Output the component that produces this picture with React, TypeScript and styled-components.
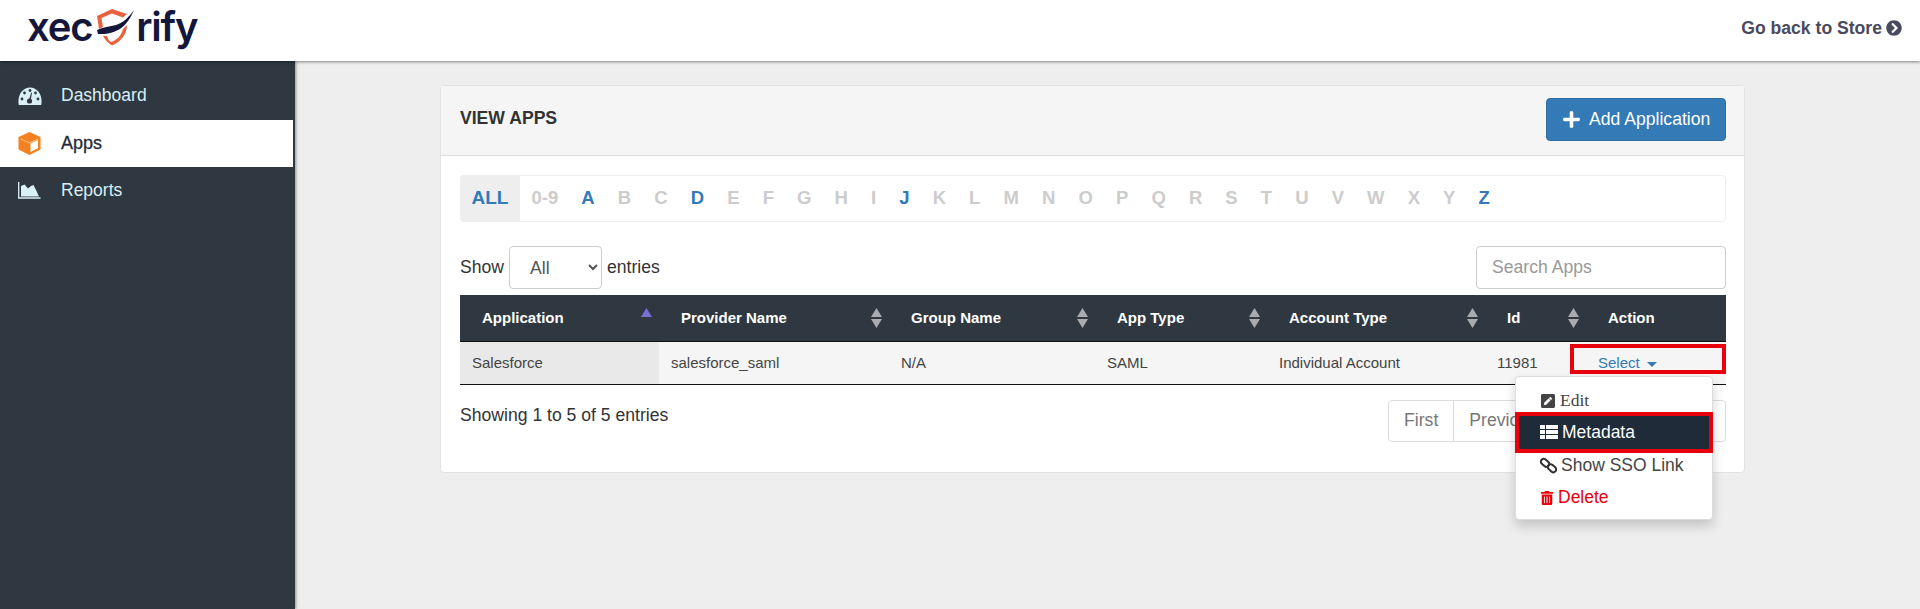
import React from 'react';
import styled, { createGlobalStyle } from 'styled-components';
import { FaPlus, FaPenSquare, FaTrashAlt, FaChevronCircleRight } from 'react-icons/fa';

const letters = ['0-9', 'A', 'B', 'C', 'D', 'E', 'F', 'G', 'H', 'I', 'J', 'K', 'L', 'M', 'N', 'O', 'P', 'Q', 'R', 'S', 'T', 'U', 'V', 'W', 'X', 'Y', 'Z'];
const activeLetters = ['A', 'D', 'J', 'Z'];
const columns = [
  { label: 'Application', width: 199, sort: 'up' },
  { label: 'Provider Name', width: 230, sort: 'both' },
  { label: 'Group Name', width: 206, sort: 'both' },
  { label: 'App Type', width: 172, sort: 'both' },
  { label: 'Account Type', width: 218, sort: 'both' },
  { label: 'Id', width: 101, sort: 'both' },
  { label: 'Action', width: 140, sort: 'none' },
];

function SortIcon({ kind }: { kind: string }) {
  if (kind === 'none') return null;
  return (
    <svg width="11" height="20" viewBox="0 0 11 20">
      <path d="M5.5 0 L11 9 L0 9 Z" fill={kind === 'up' ? '#7a70d4' : '#a9abae'} />
      {kind === 'both' && <path d="M0 11 L11 11 L5.5 20 Z" fill="#a9abae" />}
    </svg>
  );
}

function Shield() {
  return (
    <svg width="39" height="38" viewBox="0 0 39 38">
      <path d="M1 8 L16 1 L31 6 L27 9.5 L16 5.5 L5.5 10 L7 19 L3 21 Z" fill="#e8623f" />
      <path d="M7 28 L11 28 C12 31 13 33 15 34 C21 32 25 28 27 21 L31 17 C31 26 25 34 16 37.5 C12 35 9 32 7 28 Z" fill="#e8623f" />
      <path d="M38 2 C33 13 26 27 2 26 L1 22 C7 19 14 18.5 20 17 C27 15 33 9 38 2 Z" fill="#14173b" />
    </svg>
  );
}

function GaugeIcon() {
  return (
    <svg width="24" height="18" viewBox="0 0 24 18">
      <path d="M0.8 18 C-1.2 8 5 0.5 12 0.5 C19 0.5 25.2 8 23.2 18 Z" fill="#d9f0f7" />
      <g fill="#2f3841">
        <circle cx="4" cy="12" r="1.4" />
        <circle cx="6.5" cy="6" r="1.4" />
        <circle cx="12" cy="3.5" r="1.4" />
        <circle cx="20" cy="12" r="1.4" />
        <circle cx="17.5" cy="6" r="1.4" />
        <circle cx="11.5" cy="14" r="2.6" />
        <path d="M11 13 L13.2 5.5 L14 5.7 L12.6 14 Z" />
      </g>
    </svg>
  );
}

function CubeIcon() {
  return (
    <svg width="23" height="23" viewBox="0 0 23 23">
      <path d="M11.5 0 L22.5 5 V17.5 L11.5 23 L0.5 17.5 V5 Z" fill="#f58220" />
      <path d="M12.5 11.5 L20 8 V16 L12.5 20 Z" fill="#fff" />
      <path d="M3 6.5 L11.5 10.5 L20 6.5 L20.4 7.3 L11.5 11.5 L2.6 7.3 Z" fill="#fbc48f" />
    </svg>
  );
}

function AreaIcon() {
  return (
    <svg width="23" height="17" viewBox="0 0 23 17">
      <path d="M0.7 0 V16 H22.5" fill="none" stroke="#d9f0f7" strokeWidth="1.3" />
      <path d="M3 14.5 V4 L6.5 2.5 L10 6.5 L13 4 L15.5 3 L18 8 L21 14.5 Z" fill="#d9f0f7" />
    </svg>
  );
}

function TableIcon() {
  return (
    <svg width="18" height="14" viewBox="0 0 18 14">
      <g fill="#fff">
        <rect x="0" y="0" width="5" height="4" />
        <rect x="6" y="0" width="12" height="4" />
        <rect x="0" y="5" width="5" height="4" />
        <rect x="6" y="5" width="12" height="4" />
        <rect x="0" y="10" width="5" height="4" />
        <rect x="6" y="10" width="12" height="4" />
      </g>
    </svg>
  );
}

function LinkIcon() {
  return (
    <svg width="17" height="17" viewBox="0 0 17 17">
      <g fill="none" stroke="#333" strokeWidth="2">
        <rect x="0.5" y="3" width="9" height="5.6" rx="2.8" transform="rotate(42 5 5.8)" />
        <rect x="7.5" y="8.5" width="9" height="5.6" rx="2.8" transform="rotate(42 12 11.3)" />
      </g>
    </svg>
  );
}

function App() {
  return (
    <Page>
      <GlobalStyle />
      <TopBar>
        <Logo>
          xec
          <ShieldSlot><Shield /></ShieldSlot>
          rify
        </Logo>
        <BackLink>
          Go back to Store <FaChevronCircleRight size={16} />
        </BackLink>
      </TopBar>
      <Shell>
        <Sidebar>
          <NavItem>
            <NavIcon><GaugeIcon /></NavIcon>
            Dashboard
          </NavItem>
          <NavItem $active>
            <NavIcon><CubeIcon /></NavIcon>
            Apps
          </NavItem>
          <NavItem>
            <NavIcon><AreaIcon /></NavIcon>
            Reports
          </NavItem>
        </Sidebar>
        <Main>
          <Panel>
            <PanelHeading>
              <PanelTitle>VIEW APPS</PanelTitle>
              <AddButton>
                <FaPlus size={19} />
                Add Application
              </AddButton>
            </PanelHeading>
            <PanelBody>
              <AlphaBar>
                <AlphaAll>ALL</AlphaAll>
                {letters.map((l) => (
                  <AlphaLetter key={l} $active={activeLetters.includes(l)}>{l}</AlphaLetter>
                ))}
              </AlphaBar>
              <Controls>
                <LengthLabel>
                  Show
                  <LengthSelect defaultValue="All">
                    <option>All</option>
                    <option>10</option>
                    <option>25</option>
                  </LengthSelect>
                  entries
                </LengthLabel>
                <SearchInput placeholder="Search Apps" />
              </Controls>
              <AppsTable>
                <colgroup>
                  {columns.map((c) => <col key={c.label} width={c.width} />)}
                </colgroup>
                <thead>
                  <tr>
                    {columns.map((c) => (
                      <HeadCell key={c.label}>
                        <HeadInner>
                          {c.label}
                          <SortIcon kind={c.sort} />
                        </HeadInner>
                      </HeadCell>
                    ))}
                  </tr>
                </thead>
                <tbody>
                  <tr>
                    <BodyCell $sorted>Salesforce</BodyCell>
                    <BodyCell>salesforce_saml</BodyCell>
                    <BodyCell>N/A</BodyCell>
                    <BodyCell>SAML</BodyCell>
                    <BodyCell>Individual Account</BodyCell>
                    <BodyCell>11981</BodyCell>
                    <ActionCell>
                      <ActionAnchor>
                        <SelectLink>Select <Caret /></SelectLink>
                        <RedBox />
                        <Menu>
                          <MenuItem $serif><FaPenSquare size={16} /> Edit</MenuItem>
                          <MenuItem $highlight><TableIcon /> Metadata</MenuItem>
                          <MenuItem><LinkIcon /> Show SSO Link</MenuItem>
                          <MenuItem $danger><FaTrashAlt size={14} /> Delete</MenuItem>
                        </Menu>
                      </ActionAnchor>
                    </ActionCell>
                  </tr>
                </tbody>
              </AppsTable>
              <Footer>
                <Info>Showing 1 to 5 of 5 entries</Info>
                <Pager>
                  <PageLink>First</PageLink>
                  <PageLink>Previous</PageLink>
                  <PageLink>1</PageLink>
                  <PageLink>Next</PageLink>
                  <PageLink>Last</PageLink>
                </Pager>
              </Footer>
            </PanelBody>
          </Panel>
        </Main>
      </Shell>
    </Page>
  );
}

const GlobalStyle = createGlobalStyle`
  html, body {
    margin: 0;
    padding: 0;
    height: 100%;
    overflow: hidden;
    font-family: "Liberation Sans", Arial, sans-serif;
    color: #333;
    background: #eeeeee;
  }
  * {
    box-sizing: border-box;
  }
`;

const Page = styled.div`
  height: 609px;
  display: flex;
  flex-direction: column;
`;

const TopBar = styled.header`
  height: 61px;
  flex: none;
  background: #fff;
  display: flex;
  align-items: center;
  justify-content: space-between;
  padding: 0 18px 5px 28px;
  box-shadow: 0 1px 3px rgba(0, 0, 0, 0.45);
  position: relative;
  z-index: 2;
`;

const Logo = styled.div`
  display: flex;
  align-items: center;
  font-family: Inter, sans-serif;
  font-weight: 600;
  font-size: 40px;
  letter-spacing: -1.2px;
  color: #14173b;
  line-height: 1;
  margin: 0 0 3px -1px;
`;

const ShieldSlot = styled.span`
  display: flex;
  margin: 0 1px 0 4px;
`;

const BackLink = styled.div`
  display: flex;
  align-items: center;
  gap: 4px;
  font-size: 17.6px;
  font-weight: 700;
  color: #4a4a5e;
`;

const Shell = styled.div`
  flex: 1;
  display: flex;
  min-height: 0;
`;

const Sidebar = styled.nav`
  width: 295px;
  flex: none;
  background: #2f3841;
  padding: 11px 2px 0 0;
  box-shadow: 1px 0 3px rgba(0, 0, 0, 0.4);
`;

const NavItem = styled.div<{ $active?: boolean }>`
  height: 47.5px;
  display: flex;
  align-items: center;
  padding-left: 18px;
  font-size: ${(p) => (p.$active ? '18px' : '17.5px')};
  -webkit-text-stroke: ${(p) => (p.$active ? '0.3px' : '0')};
  color: ${(p) => (p.$active ? '#1f2b38' : '#d9eff5')};
  background: ${(p) => (p.$active ? '#fff' : 'transparent')};
`;

const NavIcon = styled.span`
  width: 43px;
  display: flex;
`;

const Main = styled.main`
  flex: 1;
  padding: 24px 0 0 146px;
`;

const Panel = styled.section`
  width: 1305px;
  margin-left: -1px;
  background: #fff;
  border: 1px solid #e2e2e2;
  border-radius: 4px;
`;

const PanelHeading = styled.div`
  height: 70px;
  background: #f5f5f5;
  border-bottom: 1px solid #ddd;
  display: flex;
  align-items: center;
  justify-content: space-between;
  padding: 0 18px 3px 19px;
`;

const PanelTitle = styled.h3`
  margin: 0 0 2px;
  font-size: 17.6px;
  font-weight: 700;
  color: #333;
`;

const AddButton = styled.button`
  width: 180px;
  height: 43px;
  border: 1px solid #2e6da4;
  border-radius: 4px;
  background: #337ab7;
  color: #fff;
  font-family: inherit;
  font-size: 17.6px;
  display: flex;
  align-items: center;
  gap: 8px;
  padding: 0 0 0 15px;
`;

const PanelBody = styled.div`
  padding: 19px 18px 30px 19px;
`;

const AlphaBar = styled.div`
  height: 47px;
  display: flex;
  border: 1px solid #eee;
  border-radius: 4px;
  font-size: 18.5px;
  font-weight: 700;
`;

const AlphaAll = styled.span`
  display: flex;
  align-items: center;
  padding: 0 11.5px 1px;
  margin: -1px 0 -1px -1px;
  background: #eee;
  color: #337ab7;
  font-size: 19px;
  border-radius: 4px 0 0 4px;
`;

const AlphaLetter = styled.span<{ $active?: boolean }>`
  display: flex;
  align-items: center;
  padding: 0 11.55px 1px;
  color: ${(p) => (p.$active ? '#337ab7' : '#ccc')};
`;

const Controls = styled.div`
  display: flex;
  justify-content: space-between;
  margin-top: 24px;
  height: 43px;
`;

const LengthLabel = styled.label`
  display: flex;
  align-items: center;
  gap: 5px;
  font-size: 17.6px;
  color: #333;
`;

const LengthSelect = styled.select`
  width: 93px;
  height: 43px;
  padding: 0 12px 0 16px;
  font-family: inherit;
  font-size: 17.6px;
  color: #555;
  background: #fff;
  border: 1px solid #ccc;
  border-radius: 4px;
`;

const SearchInput = styled.input`
  width: 250px;
  height: 43px;
  padding: 0 15px;
  font-family: inherit;
  font-size: 17.6px;
  border: 1px solid #ccc;
  border-radius: 4px;
  &::placeholder {
    color: #999;
  }
`;

const AppsTable = styled.table`
  width: 100%;
  margin-top: 6px;
  table-layout: fixed;
  border-collapse: collapse;
  font-size: 15px;
`;

const HeadCell = styled.th`
  height: 46px;
  background: #2f3841;
  color: #fff;
  text-align: left;
  padding: 0 7px 0 22px;
  border-bottom: 1px solid #111;
`;

const HeadInner = styled.div`
  display: flex;
  align-items: center;
  justify-content: space-between;
`;

const BodyCell = styled.td<{ $sorted?: boolean }>`
  height: 43px;
  padding: 0 12px;
  background: ${(p) => (p.$sorted ? '#e9e9e9' : '#f5f5f5')};
  border-bottom: 1px solid #111;
  color: #444;
`;

const ActionCell = styled(BodyCell)`
  padding: 0;
`;

const ActionAnchor = styled.div`
  position: relative;
  height: 42px;
  display: flex;
  align-items: center;
  padding-left: 12px;
`;

const SelectLink = styled.a`
  color: #337ab7;
  display: flex;
  align-items: center;
  gap: 7px;
`;

const Caret = styled.span`
  width: 0;
  height: 0;
  margin-top: 3px;
  border-left: 5px solid transparent;
  border-right: 5px solid transparent;
  border-top: 5px solid #337ab7;
`;

const RedBox = styled.div`
  position: absolute;
  left: -16px;
  right: 0;
  top: 2px;
  height: 30px;
  border: 4px solid #e8000d;
`;

const Menu = styled.div`
  position: absolute;
  z-index: 3;
  left: -71px;
  top: 34px;
  width: 198px;
  height: 144px;
  padding: 8px 0;
  background: #fff;
  border: 1px solid #ddd;
  border-radius: 4px;
  box-shadow: 0 6px 12px rgba(0, 0, 0, 0.18);
  font-size: 17.5px;
`;

const MenuItem = styled.div<{ $highlight?: boolean; $danger?: boolean; $serif?: boolean }>`
  height: ${(p) => (p.$highlight ? '41px' : '32px')};
  margin: ${(p) => (p.$highlight ? '-5px -1px -3px' : '0')};
  padding-left: ${(p) => (p.$highlight ? '21px' : '24px')};
  display: flex;
  align-items: center;
  gap: 4px;
  font-family: ${(p) => (p.$serif ? '"Liberation Serif", serif' : 'inherit')};
  color: ${(p) => (p.$highlight ? '#fff' : p.$danger ? '#e8000d' : '#444')};
  background: ${(p) => (p.$highlight ? '#1f2b38' : 'transparent')};
  border: ${(p) => (p.$highlight ? '4px solid #e8000d' : 'none')};
  position: relative;
`;

const Footer = styled.div`
  display: flex;
  justify-content: space-between;
  margin-top: 15px;
`;

const Info = styled.div`
  font-size: 17.6px;
  line-height: 1;
  padding-top: 7px;
`;

const Pager = styled.div`
  display: flex;
  height: 42px;
  font-size: 17.6px;
`;

const PageLink = styled.span`
  display: flex;
  align-items: center;
  padding: 0 15px;
  color: #777;
  background: #fff;
  border: 1px solid #ddd;
  margin-left: -1px;
  &:first-child {
    border-radius: 4px 0 0 4px;
  }
  &:last-child {
    border-radius: 0 4px 4px 0;
  }
`;

export default App;
